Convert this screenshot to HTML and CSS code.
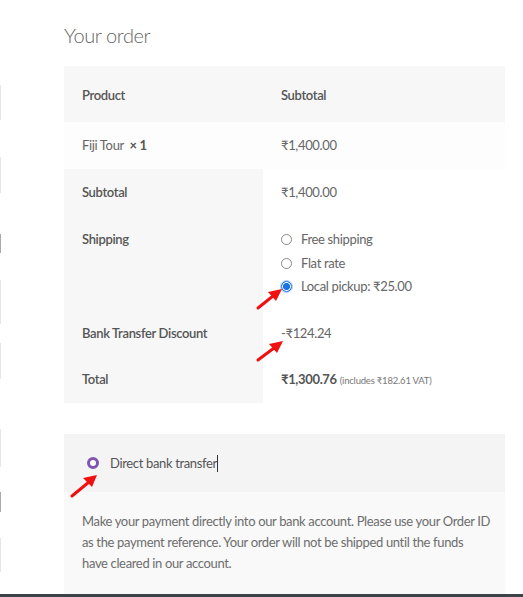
FILE: index.html
```html
<!DOCTYPE html>
<html>
<head>
<meta charset="utf-8">
<link rel="stylesheet" href="styles.css">
</head>
<body>
<div class="edge">
  <span class="tick t1"></span><span class="tick t2"></span><span class="tick t3 dark"></span><span class="tick t4"></span>
  <span class="tick t5"></span><span class="tick t6"></span><span class="tick t7 dark"></span><span class="tick t8"></span>
</div>
<div class="wrap">
  <h3 class="title">Your order</h3>
  <table class="order">
    <thead>
      <tr class="head"><th class="c1">Product</th><th class="c2">Subtotal</th></tr>
    </thead>
    <tbody>
      <tr class="item"><td class="c1">Fiji Tour&nbsp; <strong>× 1</strong></td><td class="c2">₹1,400.00</td></tr>
    </tbody>
    <tfoot>
      <tr><th class="c1">Subtotal</th><td class="c2">₹1,400.00</td></tr>
      <tr><th class="c1">Shipping</th>
        <td class="c2">
          <ul class="ship">
            <li><span class="radio"></span>Free shipping</li>
            <li><span class="radio"></span>Flat rate</li>
            <li><span class="radio checked"></span>Local pickup: ₹25.00</li>
          </ul>
        </td>
      </tr>
      <tr class="short"><th class="c1">Bank Transfer Discount</th><td class="c2">-₹124.24</td></tr>
      <tr class="short"><th class="c1">Total</th><td class="c2"><strong>₹1,300.76</strong> <small class="vat">(includes ₹182.61 VAT)</small></td></tr>
    </tfoot>
  </table>
  <div class="payment">
    <div class="method"><span class="pradio"></span><span class="mlabel">Direct bank transfer</span><span class="caret"></span></div>
    <div class="desc">Make your payment directly into our bank account. Please use your Order ID<br>as the payment reference. Your order will not be shipped until the funds<br>have cleared in our account.</div>
  </div>
</div>
<div class="bottombar"></div>
<svg class="arrows" width="523" height="597" viewBox="0 0 523 597">
  <g stroke="#f01010" stroke-width="3" stroke-linecap="round" fill="#f01010">
    <line x1="258" y1="308" x2="273" y2="296"/>
    <line x1="258" y1="360" x2="274" y2="348"/>
    <line x1="72" y1="496" x2="89" y2="482"/>
  </g>
  <g fill="#f01010">
    <polygon points="282,289 276,301 268,292"/>
    <polygon points="283,341 277,353 269,344"/>
    <polygon points="97,475 92,487 83,478"/>
  </g>
</svg>
</body>
</html>
```
FILE: styles.css
```css
html, body {
  margin: 0;
  padding: 0;
  background: #fff;
}
body {
  font-family: "Source Sans Pro", Lato, "Liberation Sans", sans-serif;
  font-size: 13px;
  letter-spacing: -0.35px;
  color: #666;
  position: relative;
  width: 523px;
  height: 597px;
  overflow: hidden;
}
.wrap {
  padding-left: 64px;
  width: 441px;
}
.title {
  margin: 0;
  padding-top: 22px;
  height: 66px;
  box-sizing: border-box;
  font-size: 20px;
  letter-spacing: -0.4px;
  font-weight: 300;
  line-height: 26px;
  color: #666;
}
.order {
  width: 441px;
  border-collapse: collapse;
  table-layout: fixed;
}
.order th, .order td {
  text-align: left;
  vertical-align: top;
  padding: 15px 18px;
  line-height: 17px;
}
.order tr.short th, .order tr.short td {
  padding-bottom: 14px;
}
.order th {
  font-weight: 600;
  color: #555;
}
.c1 { width: 163px; }
.head th {
  background: #f7f7f7;
  padding-top: 21px;
  padding-bottom: 18px;
}
.item td {
  background: #fdfdfd;
}
.item strong { font-weight: 700; color: #555; }
tfoot th { background: #f7f7f7; }
tfoot td { background: #fff; }
tfoot strong { font-weight: 700; color: #555; }
.vat { font-size: 9.5px; letter-spacing: -0.2px; color: #777; }
.ship {
  list-style: none;
  margin: 0;
  padding: 0;
}
.ship li {
  display: flex;
  align-items: center;
  height: 17px;
  margin-bottom: 6.5px;
}
.ship li:last-child { margin-bottom: 0; }
.radio {
  width: 9px;
  height: 9px;
  border: 1px solid #8a8a8a;
  border-radius: 50%;
  margin-right: 9px;
  box-sizing: content-box;
  background: #fff;
}
.radio.checked {
  border: 1px solid #1a73e8;
  background: radial-gradient(circle, #1a73e8 0 3.3px, #fff 3.8px 4.4px, #1a73e8 4.6px);
  box-shadow: 0 0 0 1px rgba(26,115,232,0.35);
}
.payment {
  margin-top: 31px;
  width: 441px;
}
.method {
  background: #f4f4f4;
  height: 58px;
  display: flex;
  align-items: center;
  padding-left: 23px;
  box-sizing: border-box;
  color: #555;
}
.pradio {
  width: 6px;
  height: 6px;
  border: 3.5px solid #7f54b3;
  border-radius: 50%;
  background: #fff;
  margin-right: 11px;
}
.mlabel { line-height: 17px; }
.caret {
  display: inline-block;
  width: 1px;
  height: 17px;
  background: #333;
}
.desc {
  background: #f9f9f9;
  padding: 19px 8px 19px 18px;
  line-height: 21px;
  color: #6d6d6d;
  height: 104px;
  box-sizing: border-box;
}
.bottombar {
  position: absolute;
  left: 0;
  top: 594px;
  width: 523px;
  height: 3px;
  background: #3c434a;
}
.edge {
  position: absolute;
  left: 0;
  top: 0;
}
.tick {
  position: absolute;
  left: 0;
  width: 1px;
  background: #e6e6e6;
}
.tick.dark { background: #aaa; }
.t1 { top: 85px; height: 35px; }
.t2 { top: 157px; height: 36px; }
.t3 { top: 234px; height: 19px; }
.t4 { top: 280px; height: 44px; }
.t5 { top: 343px; height: 36px; }
.t6 { top: 429px; height: 38px; }
.t7 { top: 492px; height: 20px; }
.t8 { top: 538px; height: 34px; }
.arrows {
  position: absolute;
  left: 0;
  top: 0;
  pointer-events: none;
}
```
